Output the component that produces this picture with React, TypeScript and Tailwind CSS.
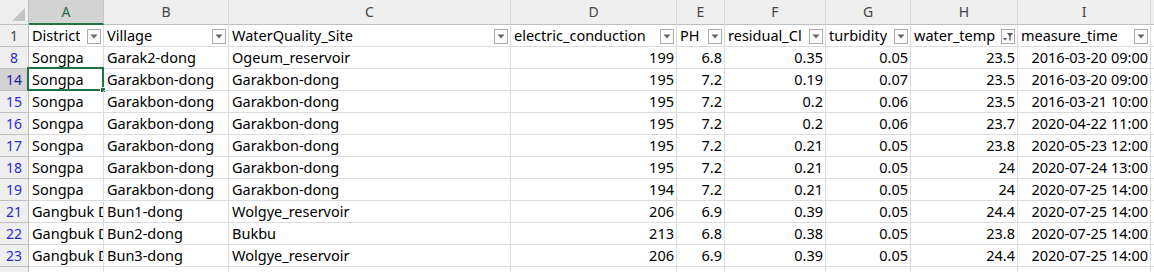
import clsx from "clsx"

type Row = { n: number; cells: string[] }

const letters = ["A", "B", "C", "D", "E", "F", "G", "H", "I"]
const fields = [
  "District",
  "Village",
  "WaterQuality_Site",
  "electric_conduction",
  "PH",
  "residual_Cl",
  "turbidity",
  "water_temp",
  "measure_time",
]

const rows: Row[] = [
  { n: 8, cells: ["Songpa", "Garak2-dong", "Ogeum_reservoir", "199", "6.8", "0.35", "0.05", "23.5", "2016-03-20 09:00"] },
  { n: 14, cells: ["Songpa", "Garakbon-dong", "Garakbon-dong", "195", "7.2", "0.19", "0.07", "23.5", "2016-03-20 09:00"] },
  { n: 15, cells: ["Songpa", "Garakbon-dong", "Garakbon-dong", "195", "7.2", "0.2", "0.06", "23.5", "2016-03-21 10:00"] },
  { n: 16, cells: ["Songpa", "Garakbon-dong", "Garakbon-dong", "195", "7.2", "0.2", "0.06", "23.7", "2020-04-22 11:00"] },
  { n: 17, cells: ["Songpa", "Garakbon-dong", "Garakbon-dong", "195", "7.2", "0.21", "0.05", "23.8", "2020-05-23 12:00"] },
  { n: 18, cells: ["Songpa", "Garakbon-dong", "Garakbon-dong", "195", "7.2", "0.21", "0.05", "24", "2020-07-24 13:00"] },
  { n: 19, cells: ["Songpa", "Garakbon-dong", "Garakbon-dong", "194", "7.2", "0.21", "0.05", "24", "2020-07-25 14:00"] },
  { n: 21, cells: ["Gangbuk District", "Bun1-dong", "Wolgye_reservoir", "206", "6.9", "0.39", "0.05", "24.4", "2020-07-25 14:00"] },
  { n: 22, cells: ["Gangbuk District", "Bun2-dong", "Bukbu", "213", "6.8", "0.38", "0.05", "23.8", "2020-07-25 14:00"] },
  { n: 23, cells: ["Gangbuk District", "Bun3-dong", "Wolgye_reservoir", "206", "6.9", "0.39", "0.05", "24.4", "2020-07-25 14:00"] },
]

// columns D..I hold numbers / dates, right aligned like Excel
const rightCols = [3, 4, 5, 6, 7, 8]

const FilterButton = ({ active }: { active?: boolean }) => (
  <div className="mb-[2px] flex h-[15px] w-[14px] shrink-0 items-center justify-center border border-[#ababab] bg-[#fbfbfb]">
    {active ? (
      <svg width="12" height="11" viewBox="0 0 12 11">
        <path d="M5 2h6L8.7 5v4.5H7.3V5z" fill="#555" />
        <path d="M1 7h4L3 9.5z" fill="#555" />
      </svg>
    ) : (
      <svg width="8" height="5" viewBox="0 0 8 5">
        <path d="M0.5 0.5h7L4 4.5z" fill="#666" />
      </svg>
    )}
  </div>
)

const App = () => {
  return (
    <div className="h-[272px] w-[1154px] overflow-hidden bg-white text-black" style={{ fontFamily: '"Noto Sans", "Liberation Sans", sans-serif' }}>
      <div className="grid grid-cols-[29px_75px_125px_282px_166px_48px_101px_85px_107px_133px_3px]">
        {/* column letters */}
        <div className="flex h-[25px] items-end justify-end border-b border-r border-[#bfbfbf] bg-[#efefef] pb-[3px] pr-[3px]">
          <svg width="13" height="13" viewBox="0 0 13 13">
            <path d="M13 0V13H0z" fill="#c4c4c4" />
          </svg>
        </div>
        {letters.map((l, i) => (
          <div
            key={l}
            className={clsx(
              "h-[25px] border-r text-center text-[14px] leading-[24px]",
              i === 0
                ? "border-b-2 border-b-[#217346] border-r-[#c6c6c6] bg-[#d3d3d3] text-[#1d6b3f]"
                : "border-b border-b-[#bfbfbf] border-r-[#dadada] bg-[#efefef] text-[#444]"
            )}
          >
            {l}
          </div>
        ))}
        <div className="h-[25px] border-b border-[#bfbfbf] bg-[#efefef]" />

        {/* header row (autofilter) */}
        <div className="h-[22px] border-b border-r border-[#bfbfbf] bg-[#efefef] text-center text-[14px] leading-[21px] text-[#444]">1</div>
        {fields.map((f, i) => (
          <div key={f} className="flex h-[22px] items-end justify-between gap-[2px] border-b border-r border-[#dadcdd] pl-[3px] pr-[2px] text-[14.5px] leading-[21px]">
            <span className="min-w-0 overflow-hidden whitespace-nowrap">{f}</span>
            <FilterButton active={i === 7} />
          </div>
        ))}
        <div className="h-[22px] border-b border-[#dadcdd]" />

        {/* data rows */}
        {rows.map((r) => {
          const sel = r.n === 14
          return (
            <div key={r.n} className="contents">
              <div
                className={clsx(
                  "h-[22px] border-b border-r text-center text-[14px] leading-[21px]",
                  sel ? "border-b-[#bfbfbf] border-r-[#217346] bg-[#d3d3d3] text-[#1a1aa6]" : "border-[#bfbfbf] bg-[#efefef] text-[#2a2ad8]"
                )}
              >
                {r.n}
              </div>
              {r.cells.map((c, i) => (
                <div
                  key={i}
                  className={clsx(
                    "relative h-[22px] overflow-hidden whitespace-nowrap border-b border-r border-[#dadcdd] text-[14.5px] leading-[21px]",
                    rightCols.includes(i) ? "pr-[2px] text-right" : "pl-[3px]",
                    sel && i === 0 && "overflow-visible"
                  )}
                >
                  {c}
                  {sel && i === 0 && (
                    <div className="absolute -bottom-[1px] -left-[2px] -right-[1px] -top-[2px] border-2 border-[#217346]">
                      <div className="absolute -bottom-[4px] -right-[4px] h-[6px] w-[6px] border border-white bg-[#217346]" />
                    </div>
                  )}
                </div>
              ))}
              <div className="h-[22px] border-b border-[#dadcdd]" />
            </div>
          )
        })}

        {/* partly visible next row */}
        <div className="h-[22px] border-r border-[#bfbfbf] bg-[#efefef]" />
        {letters.map((l) => (
          <div key={l} className="h-[22px] border-r border-[#dadcdd]" />
        ))}
        <div className="h-[22px]" />
      </div>
    </div>
  )
}

export default App
